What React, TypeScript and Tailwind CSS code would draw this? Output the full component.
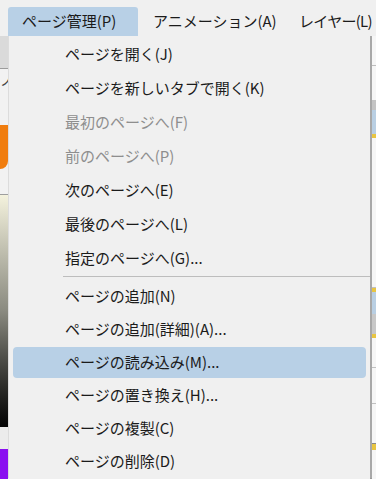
import React from 'react';

type Item = { label: string; disabled?: boolean; active?: boolean };

const topItems: Item[] = [
  { label: 'ページを開く(J)' },
  { label: 'ページを新しいタブで開く(K)' },
  { label: '最初のページへ(F)', disabled: true },
  { label: '前のページへ(P)', disabled: true },
  { label: '次のページへ(E)' },
  { label: '最後のページへ(L)' },
  { label: '指定のページへ(G)...' },
];

const bottomItems: Item[] = [
  { label: 'ページの追加(N)' },
  { label: 'ページの追加(詳細)(A)...' },
  { label: 'ページの読み込み(M)...', active: true },
  { label: 'ページの置き換え(H)...' },
  { label: 'ページの複製(C)' },
  { label: 'ページの削除(D)' },
];

const font = { fontFamily: '"Noto Sans CJK JP", "Noto Sans", sans-serif' };

const MenuRow: React.FC<{ item: Item; h: string }> = ({ item, h }) => (
  <div className={`${h} mx-1 flex items-center py-px`}>
    <div
      className={`flex h-full w-full items-center whitespace-nowrap rounded-[4px] pl-[52px] text-[15px] ${
        item.active ? 'bg-[#b8d0e6]' : ''
      } ${item.disabled ? 'text-[#8e8e8e]' : 'text-[#1b1b1b]'}`}
    >
      {item.label}
    </div>
  </div>
);

export default function App() {
  return (
    <div className="relative h-[479px] w-[376px] overflow-hidden bg-[#f0f0f0]" style={font}>
      {/* Menu bar */}
      <div className="flex h-9 items-end overflow-hidden whitespace-nowrap bg-[#f0f0f0] pl-2 text-[15px] text-[#1b1b1b]">
        <div className="flex h-[29px] w-[130px] shrink-0 items-center rounded-t-[3px] bg-[#b8d0e6] pl-[14px]">
          ページ管理(P)
        </div>
        <div className="flex h-[29px] w-[147px] shrink-0 items-center pl-[15px]">アニメーション(A)</div>
        <div className="flex h-[29px] shrink-0 items-center pl-[14px] tracking-[-0.7px]">レイヤー(L)</div>
      </div>

      {/* Application content behind the menu */}
      <div className="flex h-[443px]">
        <div className="flex w-2 flex-col">
          <div className="h-[33px] border-b border-[#9c9c9c] bg-[#dadada]" />
          <div className="flex h-[20px] items-center bg-[#f2f2f2] text-[13px] leading-none text-[#444]">ノ</div>
          <div className="h-[36px] bg-[#f2f2f2]" />
          <div className="h-[44px] rounded-br-[8px] bg-[#f07d0f]" />
          <div className="h-[26px] border-b border-[#9e9e9e] bg-[#f2f2f2]" />
          <div className="h-[232px] bg-gradient-to-b from-[#f4f2dd] via-[#8a8a80] to-[#050505]" />
          <div className="h-[22px] bg-[#ececec]" />
          <div className="flex-1 bg-[#8a10f0]" />
        </div>
        <div className="flex-1" />
        <div className="flex w-[6px] flex-col border-l-2 border-[#9a9a9a] bg-[#f6f6f6]">
          <div className="h-[30px] border-b border-[#bdbdbd]" />
          <div className="h-[34px]" />
          <div className="h-[10px] bg-[#c4c4c4]" />
          <div className="h-[24px] bg-[#b9cfe3]" />
          <div className="h-[4px] bg-[#e8c542]" />
          <div className="h-[150px] border-b border-[#c0c0c0]" />
          <div className="h-[4px] bg-[#e8c542]" />
          <div className="h-[22px] bg-[#b9cfe3]" />
          <div className="h-[20px] bg-[#c8c8c8]" />
          <div className="h-[4px] bg-[#e8c542]" />
          <div className="h-[30px] border-b border-[#c0c0c0]" />
          <div className="h-[36px] border-b border-[#c0c0c0]" />
          <div className="h-[40px] border-b border-[#888]" />
          <div className="h-[6px] bg-[#e8c542]" />
        </div>
      </div>

      {/* Dropdown menu */}
      <div className="absolute left-2 top-9 w-[362px] border-l border-[#dcdcdc] bg-[#f0f0f0] pt-px shadow-[2px_0_0_#a8a8a8]">
        {topItems.map((it) => (
          <MenuRow key={it.label} item={it} h="h-[34px]" />
        ))}
        <div className="flex h-[5px] items-start pl-[54px] pt-px">
          <div className="h-px w-full bg-[#bdbdbd]" />
        </div>
        {bottomItems.map((it) => (
          <MenuRow key={it.label} item={it} h="h-[33px]" />
        ))}
      </div>
    </div>
  );
}
